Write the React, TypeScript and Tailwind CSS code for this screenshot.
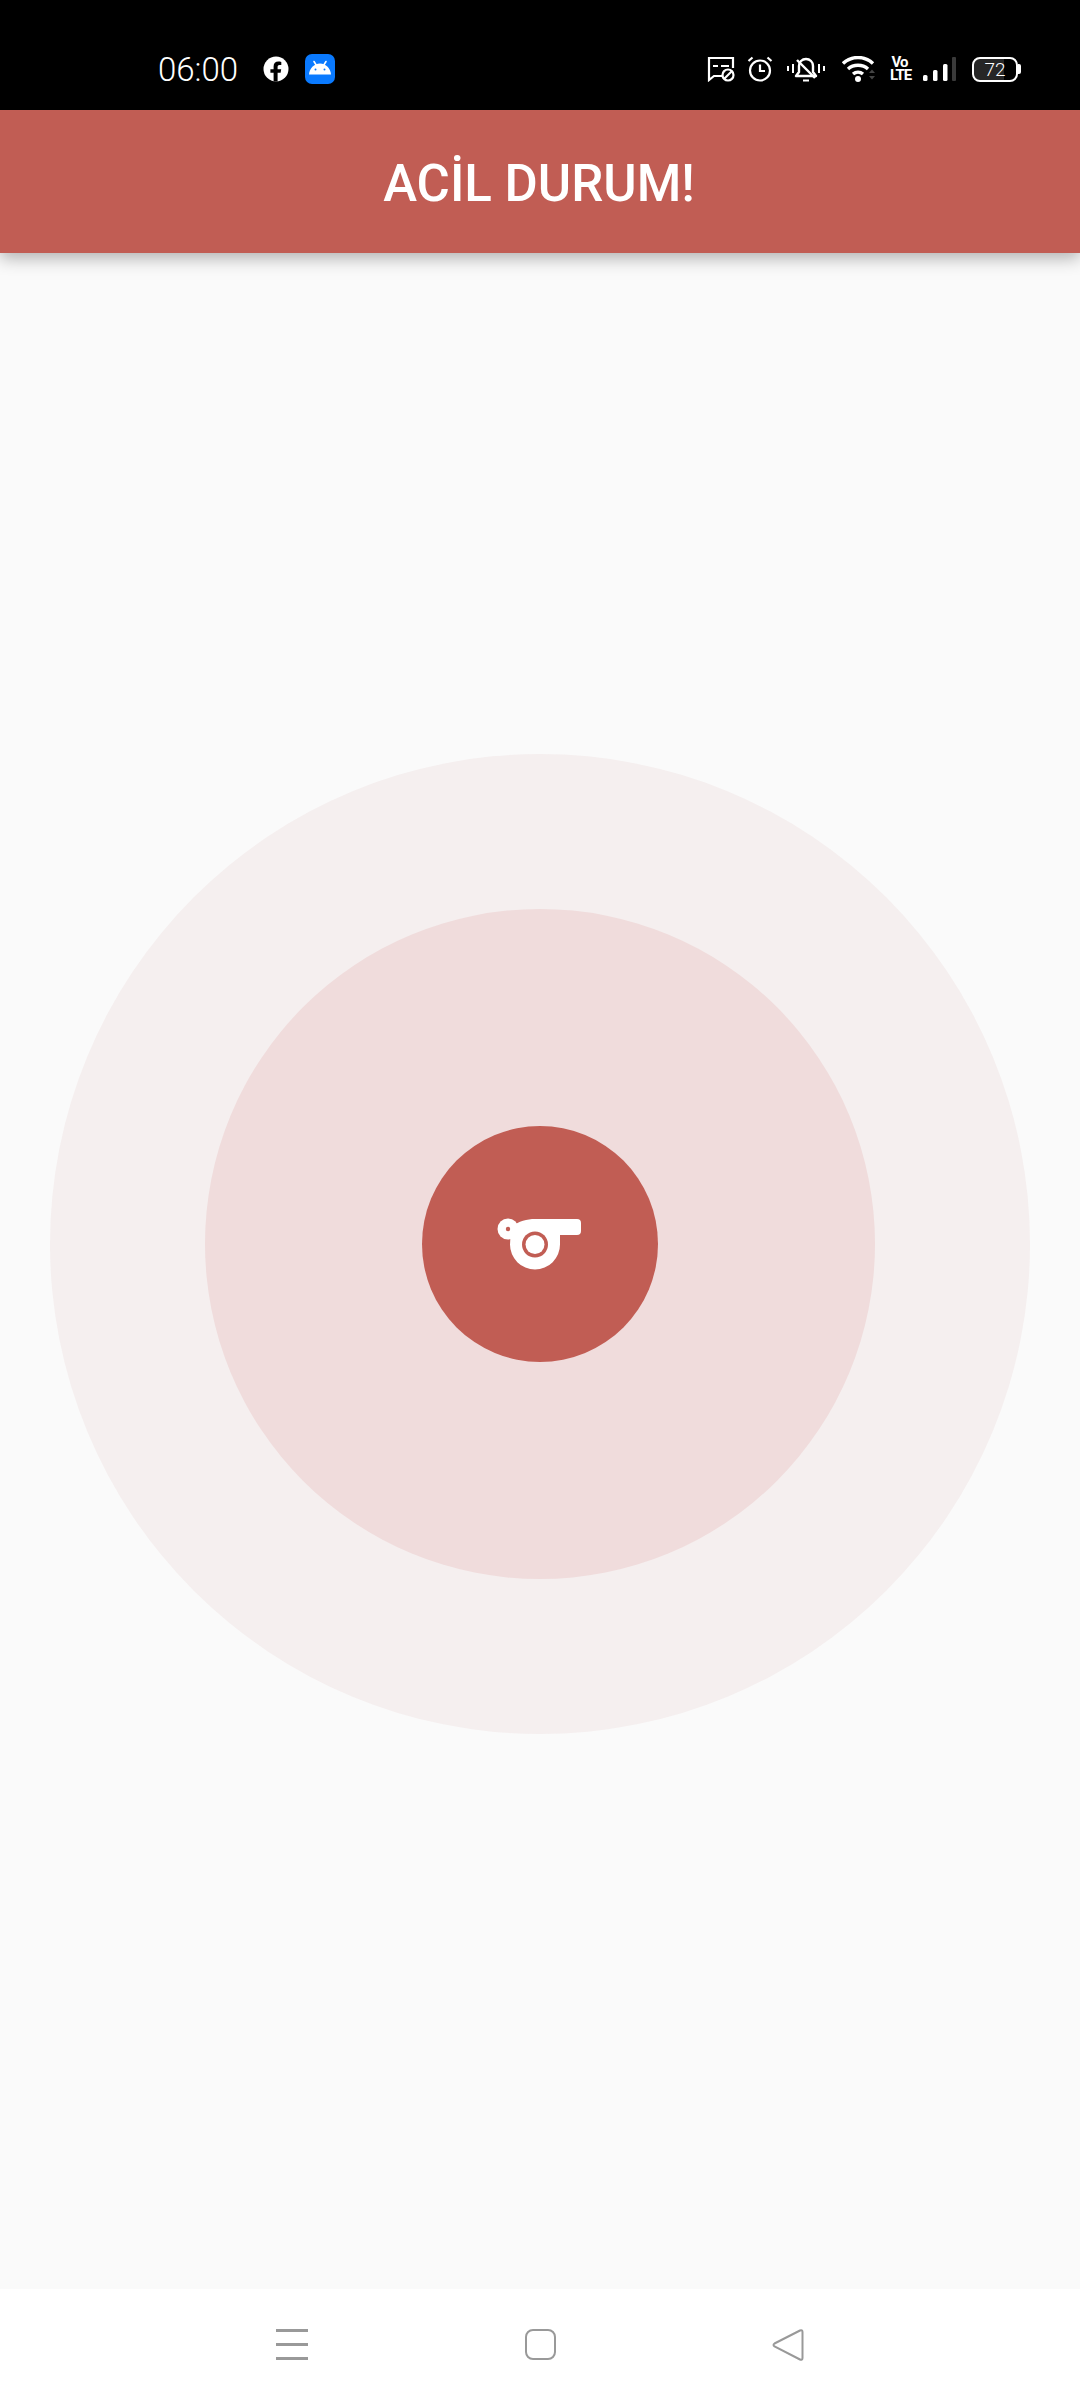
import React from "react";

function Facebook() {
  return (
    <svg width="26" height="26" viewBox="0 0 26 26" className="block">
      <circle cx="13" cy="13" r="12.5" fill="#fff" />
      <path d="M14.6 25.6v-8.8h3l.6-3.6h-3.6v-2.3c0-1.1.5-2 2-2h1.7V5.9c-.9-.2-1.9-.3-2.9-.3-3 0-4.8 1.8-4.8 4.9v2.7H7.4v3.6h3.2v8.6z" fill="#000" />
    </svg>
  );
}

function AndroidTile() {
  return (
    <svg width="30" height="30" viewBox="0 0 30 30" className="block">
      <rect width="30" height="30" rx="7" fill="#0a7aff" />
      <path d="M4 20.5c.4-6 5-11 11-11s10.6 5 11 11z" fill="#fff" />
      <path d="M9 7.5l2.5 4M21 7.5l-2.5 4" stroke="#fff" strokeWidth="1.6" strokeLinecap="round" />
      <circle cx="10.5" cy="15.5" r="1" fill="#0a7aff" />
      <circle cx="19.5" cy="15.5" r="1" fill="#0a7aff" />
    </svg>
  );
}

function ImageBlock() {
  return (
    <svg width="28" height="26" viewBox="0 0 28 26" fill="none" className="block">
      <path d="M15 20H7l-5 4V2h24v10" stroke="#fff" strokeWidth="2.2" />
      <path d="M6 10h5M14 10h8" stroke="#fff" strokeWidth="2.2" />
      <circle cx="21" cy="19" r="5.5" stroke="#fff" strokeWidth="2.2" />
      <path d="M17.5 22.5l7-7" stroke="#fff" strokeWidth="2.2" />
    </svg>
  );
}

function Alarm() {
  return (
    <svg width="26" height="26" viewBox="0 0 26 26" fill="none" className="block">
      <circle cx="13" cy="14.5" r="10" stroke="#fff" strokeWidth="2.2" />
      <path d="M13 8.5v6.5h5" stroke="#fff" strokeWidth="2.2" />
      <path d="M1.5 5l4-3.5M24.5 5l-4-3.5" stroke="#fff" strokeWidth="2.2" />
    </svg>
  );
}

function BellOff() {
  return (
    <svg width="38" height="26" viewBox="0 0 38 26" fill="none" className="block">
      <path d="M9 20h20l-3-4v-6c0-4-3-7-7-7s-7 3-7 7v6z" stroke="#fff" strokeWidth="2.4" strokeLinejoin="round" />
      <path d="M10 4l18 18" stroke="#fff" strokeWidth="2.4" />
      <path d="M16 24.5h6" stroke="#fff" strokeWidth="2" />
      <path d="M1 10v5M6 8v9M32 8v9M37 10v5" stroke="#fff" strokeWidth="2" />
    </svg>
  );
}

function Wifi() {
  return (
    <svg width="34" height="26" viewBox="0 0 34 26" fill="none" className="block">
      <path d="M1 7.5C9.5 -0.5 22.5 -0.5 31 7.5" stroke="#fff" strokeWidth="3.4" />
      <path d="M6 13c5.5-5 14.5-5 20 0" stroke="#fff" strokeWidth="3.4" />
      <path d="M11 18c3-2.5 7-2.5 10 0" stroke="#fff" strokeWidth="3.4" />
      <circle cx="16" cy="23" r="3" fill="#fff" />
      <path d="M27 17l3-3.5 3 3.5zM27 20l3 3.5 3-3.5z" fill="#444" />
    </svg>
  );
}

function Signal() {
  return (
    <svg width="34" height="26" viewBox="0 0 34 26" className="block">
      <rect x="0" y="19" width="4.5" height="6" rx="1.5" fill="#fff" />
      <rect x="10" y="14" width="4.5" height="11" rx="1.5" fill="#fff" />
      <rect x="20" y="8" width="4.5" height="17" rx="1.5" fill="#fff" />
      <rect x="29" y="1" width="4" height="24" rx="1" fill="#3a3a3a" />
    </svg>
  );
}

function Whistle() {
  return (
    <svg width="84" height="52" viewBox="0 0 84 52" className="mr-[2px] block">
      <circle cx="11" cy="11" r="10.5" fill="#fff" />
      <path d="M14 9C22 3 30 1 38 1h42a4 4 0 0 1 4 4v8a4 4 0 0 1-4 4H63V26.5A25 25 0 1 1 13 26.5z" fill="#fff" />
      <circle cx="11" cy="11" r="2.2" fill="#c15d54" />
      <circle cx="38" cy="26.5" r="13" fill="#c15d54" />
      <circle cx="38" cy="26.5" r="9.5" fill="#fff" />
    </svg>
  );
}

export default function App() {
  return (
    <div className="flex h-[2400px] w-[1080px] flex-col overflow-hidden bg-[#fafafa] font-['Roboto',sans-serif]">
      <header className="flex h-[110px] shrink-0 items-center bg-black pl-[158px] pr-[59px] pt-[28px] text-white">
        <span className="w-[82px] text-[33px] font-light leading-none">06:00</span>
        <span className="ml-[23px]"><Facebook /></span>
        <span className="ml-[16px]"><AndroidTile /></span>
        <div className="ml-auto flex items-center">
          <ImageBlock />
          <span className="ml-[12px]"><Alarm /></span>
          <span className="ml-[14px]"><BellOff /></span>
          <span className="ml-[17px]"><Wifi /></span>
          <span className="ml-[14px] w-[19px] whitespace-pre text-center text-[15px] font-bold leading-[13px] tracking-[-1px]">{"Vo\nLTE"}</span>
          <span className="ml-[14px]"><Signal /></span>
          <span className="ml-[15px] flex items-center">
            <span className="flex h-[25px] w-[46px] items-center justify-center rounded-[8px] border-2 border-white bg-[linear-gradient(90deg,#262626_72%,#000_72%)] text-[19px] font-light leading-none">72</span>
            <span className="h-[10px] w-[3px] rounded-r-[2px] bg-white" />
          </span>
        </div>
      </header>

      <div className="relative z-10 flex h-[143px] shrink-0 items-center justify-center bg-[#c15d54] pr-[2px] pt-[3px] shadow-[0_5px_16px_rgba(0,0,0,0.3)]">
        <h1 className="text-[51px] font-medium leading-none text-white">ACİL DURUM!</h1>
      </div>

      <main className="flex flex-1 items-center justify-center pb-[54px]">
        <div className="flex h-[980px] w-[980px] shrink-0 items-center justify-center rounded-full bg-[#f5efef]">
          <div className="flex h-[670px] w-[670px] items-center justify-center rounded-full bg-[#f0dcdc]">
            <div className="flex h-[236px] w-[236px] items-center justify-center rounded-full bg-[#c15d54]">
              <Whistle />
            </div>
          </div>
        </div>
      </main>

      <nav className="flex h-[111px] shrink-0 items-start bg-white pl-[276px] pt-[40px]">
        <div className="flex h-[31px] w-[32px] flex-col justify-between">
          <span className="h-[3px] bg-[#999]" />
          <span className="h-[3px] bg-[#999]" />
          <span className="h-[3px] bg-[#999]" />
        </div>
        <div className="ml-[217px] h-[31px] w-[31px] rounded-[8px] border-2 border-[#999]" />
        <svg width="32" height="32" viewBox="0 0 32 32" fill="none" className="ml-[216px] block">
          <path d="M2.5 14.5L28 1.5c1.5-.8 2.5 0 2.5 1.5v26c0 1.5-1 2.3-2.5 1.5L2.5 17.5c-1.3-.8-1.3-2.2 0-3z" stroke="#999" strokeWidth="2" />
        </svg>
      </nav>
    </div>
  );
}
